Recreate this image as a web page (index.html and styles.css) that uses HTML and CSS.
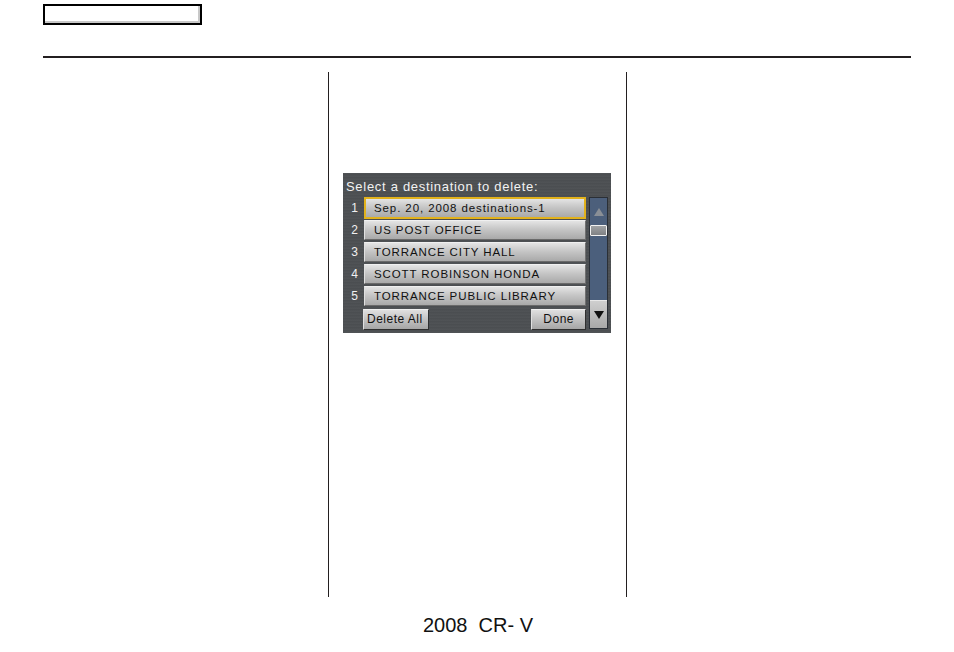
FILE: index.html
```html
<!DOCTYPE html>
<html>
<head>
<meta charset="utf-8">
<link rel="stylesheet" href="styles.css">
</head>
<body>
<div class="page">
  <div class="tab"></div>
  <div class="rule"></div>
  <div class="cols">
    <div class="col col1"></div>
    <div class="col col2">
      <div class="screen">
        <div class="title">Select a destination to delete:</div>
        <div class="body">
          <div class="list">
            <div class="row"><span class="num">1</span><div class="item sel">Sep. 20, 2008 destinations-1</div></div>
            <div class="row"><span class="num">2</span><div class="item">US POST OFFICE</div></div>
            <div class="row"><span class="num">3</span><div class="item">TORRANCE CITY HALL</div></div>
            <div class="row"><span class="num">4</span><div class="item">SCOTT ROBINSON HONDA</div></div>
            <div class="row"><span class="num">5</span><div class="item">TORRANCE PUBLIC LIBRARY</div></div>
            <div class="actions">
              <div class="btn">Delete All</div>
              <div class="btn done">Done</div>
            </div>
          </div>
          <div class="scroll">
            <div class="up"><span class="tri-up"></span></div>
            <div class="thumb"></div>
            <div class="track"></div>
            <div class="down"><span class="tri-down"></span></div>
          </div>
        </div>
      </div>
    </div>
    <div class="col col3"></div>
  </div>
  <div class="footer">2008&nbsp; CR- V</div>
</div>
</body>
</html>
```
FILE: styles.css
```css
html, body { margin: 0; padding: 0; background: #fff; }
.page { width: 954px; height: 652px; position: relative; font-family: "Liberation Sans", Arial, sans-serif; }
.tab {
  margin: 4px 0 0 43px; width: 155px; height: 17px;
  border: 2px solid #000; background: #fff;
  box-shadow: inset -2px -2px 0 #c8c8c8;
}
.rule { margin: 31px 0 0 43px; width: 868px; height: 2px; background: #231f20; }
.cols { display: flex; margin: 14px 0 0 43px; height: 525px; }
.col { height: 525px; }
.col1 { width: 285px; border-right: 1px solid #231f20; }
.col2 { width: 298px; border-right: 1px solid #231f20; padding: 101px 0 0 14px; box-sizing: border-box; }
.col3 { width: 283px; }
.screen {
  width: 268px; height: 160px; box-sizing: border-box;
  background: repeating-linear-gradient(0deg, #4a4d50 0px, #55585b 1px, #46494c 2px, #505356 3px);
  padding: 4px 3px 3px 2px;
  display: flex; flex-direction: column;
}
.title { color: #f2f2f2; font-size: 13px; height: 22px; line-height: 19px; padding-left: 1px; letter-spacing: 0.7px; white-space: nowrap; }
.body { display: flex; }
.list { width: 244px; }
.row { display: flex; align-items: center; height: 22px; }
.num { width: 19px; text-align: center; color: #f0f0f0; font-size: 12px; }
.item {
  width: 222px; height: 20px; box-sizing: border-box;
  background: linear-gradient(#e4e4e4, #c6c6c6 45%, #a9a9a9);
  border-top: 1px solid #f0f0f0; border-left: 1px solid #e0e0e0;
  border-bottom: 1px solid #6a6a6a; border-right: 1px solid #707070;
  color: #111; font-size: 11.5px; line-height: 18px; padding-left: 9px; letter-spacing: 0.9px; white-space: nowrap;
}
.item.sel { border: 2px solid #e2b21c; height: 22px; line-height: 18px; padding-left: 8px; }
.actions { display: flex; justify-content: space-between; padding: 2px 0 0 18px; }
.btn {
  height: 21px; box-sizing: border-box;
  background: linear-gradient(#e0e0e0, #c2c2c2 50%, #a6a6a6);
  border-top: 1px solid #f0f0f0; border-left: 1px solid #e0e0e0;
  border-bottom: 1px solid #303030; border-right: 1px solid #303030;
  color: #111; font-size: 12px; line-height: 19px; padding: 0 3px; width: 66px; letter-spacing: 0.5px; white-space: nowrap;
}
.btn.done { width: 55px; text-align: center; }
.scroll { width: 19px; margin: 0 0 0 3px; display: flex; flex-direction: column; border: 1px solid #2a2f36; height: 132px; box-sizing: border-box; }
.up { height: 27px; background: #4c5f7b; display: flex; align-items: center; justify-content: center; }
.tri-up { width: 0; height: 0; border-left: 5px solid transparent; border-right: 5px solid transparent; border-bottom: 8px solid #8a8f96; }
.thumb { height: 11px; background: linear-gradient(#a0a2a4, #808285); border: 1px solid #f2f2f2; border-radius: 1px; box-sizing: border-box; }
.track { flex: 1; background: #4b5f7c; }
.down { height: 28px; background: linear-gradient(#cfcfcf, #a8a8a8); border-top: 1px solid #e8e8e8; display: flex; align-items: center; justify-content: center; box-sizing: border-box; }
.tri-down { width: 0; height: 0; border-left: 5px solid transparent; border-right: 5px solid transparent; border-top: 8px solid #111; }
.footer { text-align: center; font-size: 20px; margin-top: 16px; color: #111; line-height: 24px; padding-left: 2px; }
```
